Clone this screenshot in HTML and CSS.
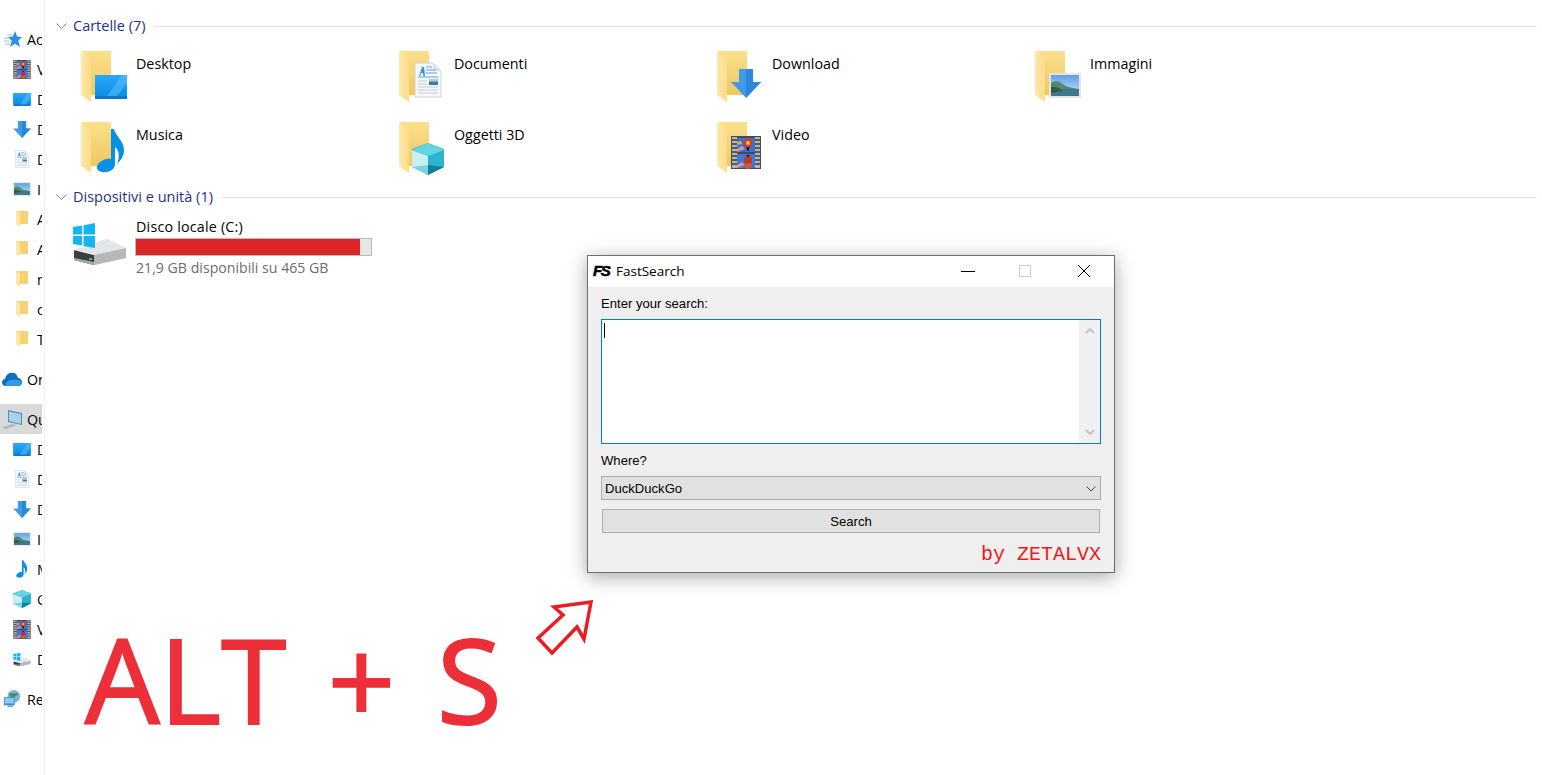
FILE: index.html
```html
<!DOCTYPE html>
<html lang="it">
<head>
<meta charset="utf-8">
<title>FastSearch</title>
<link rel="stylesheet" href="styles.css">
</head>
<body>
<svg class="defs" width="0" height="0" aria-hidden="true">
  <defs>
    <linearGradient id="gback" x1="0" y1="0" x2="0" y2="1"><stop offset="0" stop-color="#fbe08c"/><stop offset="1" stop-color="#f0c860"/></linearGradient>
    <linearGradient id="gflap" x1="0" y1="0" x2="1" y2="0"><stop offset="0" stop-color="#fee9a8"/><stop offset="1" stop-color="#fbdc88"/></linearGradient>
    <linearGradient id="gblue" x1="0" y1="0" x2="0" y2="1"><stop offset="0" stop-color="#2aa8fb"/><stop offset="1" stop-color="#0a8ee8"/></linearGradient>
    <linearGradient id="gsky" x1="0" y1="0" x2="0" y2="1"><stop offset="0" stop-color="#5f9fe8"/><stop offset="1" stop-color="#cfe3f5"/></linearGradient>
    <symbol id="folder" viewBox="0 0 32 52" overflow="visible">
      <path d="M1 1H31V45H11V9z" fill="url(#gback)"/>
      <path d="M1 1L11 8V52L1 45z" fill="url(#gflap)"/>
      <path d="M11 45H22L11 52z" fill="#fff"/>
    </symbol>
    <symbol id="desk" viewBox="0 0 32 24">
      <rect width="32" height="24" fill="#0f77c9"/>
      <rect x="0" y="0" width="32" height="21" fill="url(#gblue)"/>
      <path d="M12 21L27 0H32V8L22 21z" fill="#5cc0fc" opacity=".55"/>
    </symbol>
    <symbol id="note" viewBox="0 0 30 44">
      <path d="M15 0H18C19 6 28 12 28 21C28 27 25 31 21 35C24 27 23 21 19 18V35C19 41 12 44 6 43C0 42 -1 37 4 33C8 30 12 29 15 30z" fill="#0a8fe8"/>
    </symbol>
    <symbol id="doc" viewBox="0 0 28 36">
      <path d="M1 1H19L27 9V35H1z" fill="#f6f7f9" stroke="#cfd2d6"/>
      <path d="M19 1V9H27z" fill="#dfe2e6"/>
      <path d="M5 14L8 5H10L11 14H9.300L9 11H7L6 14z" fill="#3d8fdc"/>
      <path d="M12 5H18M12 8H22M12 11H23" stroke="#5aa5e4" stroke-width="1"/>
      <path d="M4 15H24" stroke="#5aa5e4" stroke-width="1"/>
      <path d="M4 19H13M4 22H13M4 25H24M4 28H24M4 31H24" stroke="#c8ccd2" stroke-width="1"/>
      <rect x="15" y="17" width="9" height="6" fill="#3f7f96"/>
      <rect x="15" y="17" width="9" height="2.500" fill="#a9cde8"/>
    </symbol>
    <symbol id="down" viewBox="0 0 30 29">
      <path d="M8 0H22V13H30L15 29L0 13H8z" fill="#3d9be9"/>
      <path d="M15 0H22V13H30L15 29z" fill="#2b87d8"/>
    </symbol>
    <symbol id="pic" viewBox="0 0 32 25">
      <rect width="32" height="25" fill="#e4e6e8"/>
      <rect x="2" y="2" width="28" height="21" fill="url(#gsky)"/>
      <path d="M2 10C7 7 11 8 15 12C20 15 26 15 30 16V23H2z" fill="#4d8a70"/>
      <path d="M2 16H30V23H2z" fill="#42778c"/>
      <path d="M2 14C6 13 10 14 14 18L2 20z" fill="#2f5f3c"/>
    </symbol>
    <symbol id="cube" viewBox="0 0 32 32">
      <path d="M16 0L32 6V24L16 32L0 24V6z" fill="#2bb3cf"/>
      <path d="M0 7L16 13V32L0 24z" fill="#c9eff4"/>
      <path d="M0 7L16 0L32 7L16 13z" fill="#62d5e5"/>
      <path d="M16 22L32 24L16 32z" fill="#0f7f9c"/>
      <path d="M16 22L0 24L16 32z" fill="#7fd2e0"/>
    </symbol>
    <symbol id="film" viewBox="0 0 30 33">
      <rect width="30" height="33" fill="#4a4a4a"/>
      <rect x="1" y="1" width="5" height="31" fill="#b5b5b5"/>
      <rect x="24" y="1" width="5" height="31" fill="#b5b5b5"/>
      <path d="M1 4H6M1 8H6M1 12H6M1 16H6M1 20H6M1 24H6M1 28H6M24 4H29M24 8H29M24 12H29M24 16H29M24 20H29M24 24H29M24 28H29" stroke="#3c3c3c" stroke-width="1.500"/>
      <rect x="6" y="2" width="18" height="14" fill="#3970d8"/>
      <rect x="6" y="18" width="18" height="14" fill="#3f78dc"/>
      <path d="M6 13L11 10L14 13L6 16zM6 29L11 26L14 29L6 32z" fill="#e89090"/>
      <path d="M6 6L10 5L11 8L6 9z" fill="#e8b040"/>
      <circle cx="17" cy="7" r="4.500" fill="#d83c20"/>
      <circle cx="17" cy="7" r="2" fill="#f2c430"/>
      <path d="M15.500 11H18.500L17.500 15H16.500z" fill="#111"/>
      <circle cx="17" cy="24" r="4" fill="#c83418"/>
      <path d="M15 19H19L17 21z" fill="#111"/>
      <circle cx="17" cy="30" r="3" fill="#e05020"/>
    </symbol>
    <symbol id="star" viewBox="0 0 18 17">
      <path d="M11 0L13.200 5.500L18 6L14.300 9.800L16 16L11 12.800L6 16L7.700 9.800L4 6L8.800 5.500z" fill="#2d8fdd"/>
      <path d="M0 7H4M0 10H5M1 13H6M3 4H8" stroke="#8cc4ef" stroke-width="1"/>
    </symbol>
    <symbol id="cloud" viewBox="0 0 20 14">
      <path d="M4 14C1 14 0 12 0 10C0 8 2 7 3 7C4 3 7 0 11 1C14 1 15 3 16 6C18 6 20 8 20 10C20 13 18 14 16 14z" fill="#0f6cc0"/>
      <path d="M4 14C3 11 6 8 9 8C12 7 16 7 20 10C20 13 18 14 16 14z" fill="#2c9ae6"/>
    </symbol>
    <symbol id="pc" viewBox="0 0 20 19">
      <path d="M6 0L20 3V15L6 12z" fill="#4f8fbf"/>
      <path d="M7 1.500L19 4V14L7 11z" fill="#a9d0ec"/>
      <path d="M0 17L11 14L15 15.500L4 19z" fill="#b4b8bc"/>
    </symbol>
    <symbol id="disk" viewBox="0 0 56 42">
      <path d="M2 27L35 16L54 25V35L22 42L2 37z" fill="#d9dadc"/>
      <path d="M2 27L22 32V42L2 37z" fill="#3e3e3e"/>
      <path d="M22 32L54 25V35L22 42z" fill="#b6b7b9"/>
      <path d="M2 27L35 16L54 25L22 32z" fill="#e4e5e7"/>
      <path d="M2 35L22 39V42L2 37z" fill="#a8a9ab"/>
      <rect x="17" y="35" width="3" height="2" fill="#3ecf4a"/>
      <path d="M1 4L10 2.500V11.500H1zM11.500 2.200L23 0V11.500H11.500zM1 13H10V22.500L1 21zM11.500 13H23V25L11.500 23z" fill="#14b6ef"/>
    </symbol>
    <symbol id="net" viewBox="0 0 20 20">
      <circle cx="12" cy="7" r="7" fill="#7db3d8"/>
      <path d="M7 3C10 5 14 2 17 4C15 8 12 7 10 9C8 8 7 6 7 3z" fill="#4c8a6e"/>
      <rect x="1" y="8" width="12" height="9" fill="#2f8fd8"/>
      <rect x="2" y="9" width="10" height="6" fill="#8fcaf2"/>
      <rect x="5" y="17" width="6" height="2" fill="#9aa0a6"/>
    </symbol>
    <symbol id="sfolder" viewBox="0 0 12 16">
      <path d="M0 0H12V13H3V3z" fill="#f5d276"/>
      <path d="M0 0L4 2V16L0 13z" fill="#fde7a2"/>
    </symbol>
  </defs>
</svg>

<div class="explorer">
  <nav class="sidebar">
    <div class="group">
      <div class="row top"><svg class="ico-star"><use href="#star"/></svg><span>Accesso rapido</span></div>
      <div class="row"><svg class="ico-film"><use href="#film"/></svg><span>Video</span></div>
      <div class="row"><svg class="ico-desk"><use href="#desk"/></svg><span>Desktop</span></div>
      <div class="row"><svg class="ico-down"><use href="#down"/></svg><span>Download</span></div>
      <div class="row"><svg class="ico-doc"><use href="#doc"/></svg><span>Documenti</span></div>
      <div class="row"><svg class="ico-pic"><use href="#pic"/></svg><span>Immagini</span></div>
      <div class="row"><svg class="ico-sf"><use href="#sfolder"/></svg><span>App</span></div>
      <div class="row"><svg class="ico-sf"><use href="#sfolder"/></svg><span>Archivio</span></div>
      <div class="row"><svg class="ico-sf"><use href="#sfolder"/></svg><span>nuova</span></div>
      <div class="row"><svg class="ico-sf"><use href="#sfolder"/></svg><span>codice</span></div>
      <div class="row"><svg class="ico-sf"><use href="#sfolder"/></svg><span>Temp</span></div>
    </div>
    <div class="group">
      <div class="row top"><svg class="ico-cloud"><use href="#cloud"/></svg><span>OneDrive</span></div>
    </div>
    <div class="group">
      <div class="row top selected"><svg class="ico-pc"><use href="#pc"/></svg><span>Questo PC</span></div>
      <div class="row"><svg class="ico-desk"><use href="#desk"/></svg><span>Desktop</span></div>
      <div class="row"><svg class="ico-doc"><use href="#doc"/></svg><span>Documenti</span></div>
      <div class="row"><svg class="ico-down"><use href="#down"/></svg><span>Download</span></div>
      <div class="row"><svg class="ico-pic"><use href="#pic"/></svg><span>Immagini</span></div>
      <div class="row"><svg class="ico-note"><use href="#note"/></svg><span>Musica</span></div>
      <div class="row"><svg class="ico-cube"><use href="#cube"/></svg><span>Oggetti 3D</span></div>
      <div class="row"><svg class="ico-film"><use href="#film"/></svg><span>Video</span></div>
      <div class="row"><svg class="ico-disk"><use href="#disk"/></svg><span>Disco locale</span></div>
    </div>
    <div class="group">
      <div class="row top"><svg class="ico-net"><use href="#net"/></svg><span>Rete</span></div>
    </div>
  </nav>

  <main class="content">
    <section class="section">
      <header class="section-head">
        <svg class="chev" viewBox="0 0 11 6"><path d="M.5.500L5.500 5.500L10.500.500" fill="none" stroke="#8a8a8a"/></svg>
        <span class="section-title">Cartelle (7)</span>
        <span class="section-line"></span>
      </header>
      <div class="tiles">
        <div class="tile"><svg class="tile-ico" viewBox="0 0 48 52"><use href="#folder" x="0" y="0" width="32" height="52"/><use href="#desk" x="15" y="25" width="32" height="24"/></svg><span class="tile-name">Desktop</span></div>
        <div class="tile"><svg class="tile-ico" viewBox="0 0 48 52"><use href="#folder" x="0" y="0" width="32" height="52"/><use href="#doc" x="16" y="12" width="28" height="36"/></svg><span class="tile-name">Documenti</span></div>
        <div class="tile"><svg class="tile-ico" viewBox="0 0 48 52"><use href="#folder" x="0" y="0" width="32" height="52"/><use href="#down" x="15" y="19" width="30" height="29"/></svg><span class="tile-name">Download</span></div>
        <div class="tile"><svg class="tile-ico" viewBox="0 0 48 52"><use href="#folder" x="0" y="0" width="32" height="52"/><use href="#pic" x="15" y="23" width="32" height="25"/></svg><span class="tile-name">Immagini</span></div>
        <div class="tile"><svg class="tile-ico" viewBox="0 0 48 52"><use href="#folder" x="0" y="0" width="32" height="52"/><use href="#note" x="16" y="8" width="30" height="44"/></svg><span class="tile-name">Musica</span></div>
        <div class="tile"><svg class="tile-ico" viewBox="0 0 48 52"><use href="#folder" x="0" y="0" width="32" height="52"/><use href="#cube" x="14" y="22" width="32" height="32"/></svg><span class="tile-name">Oggetti 3D</span></div>
        <div class="tile"><svg class="tile-ico" viewBox="0 0 48 52"><use href="#folder" x="0" y="0" width="32" height="52"/><use href="#film" x="15" y="15" width="30" height="33"/></svg><span class="tile-name">Video</span></div>
      </div>
    </section>
    <section class="section">
      <header class="section-head">
        <svg class="chev" viewBox="0 0 11 6"><path d="M.5.500L5.500 5.500L10.500.500" fill="none" stroke="#8a8a8a"/></svg>
        <span class="section-title">Dispositivi e unità (1)</span>
        <span class="section-line"></span>
      </header>
      <div class="drive">
        <svg class="drive-ico"><use href="#disk"/></svg>
        <div class="drive-info">
          <div class="drive-name">Disco locale (C:)</div>
          <div class="bar"><div class="bar-fill"></div></div>
          <div class="drive-free">21,9 GB disponibili su 465 GB</div>
        </div>
      </div>
    </section>
  </main>
</div>

<div class="dialog">
  <div class="titlebar">
    <span class="app-logo">FS</span>
    <span class="app-title">FastSearch</span>
    <div class="controls">
      <span class="ctl"><svg class="ctl-ico" viewBox="0 0 14 14"><path d="M0 7.500H14" stroke="#000" fill="none"/></svg></span>
      <span class="ctl"><svg class="ctl-ico" viewBox="0 0 14 14"><rect x="1.500" y="1.500" width="11" height="11" stroke="#ccc" fill="none"/></svg></span>
      <span class="ctl"><svg class="ctl-ico" viewBox="0 0 14 14"><path d="M1 1L13 13M13 1L1 13" stroke="#000" fill="none"/></svg></span>
    </div>
  </div>
  <div class="dialog-body">
    <div class="label">Enter your search:</div>
    <div class="textbox">
      <div class="textarea"><span class="caret"></span></div>
      <div class="scrollbar">
        <svg class="sb-arrow" viewBox="0 0 10 6"><path d="M1 5L5 1L9 5" fill="none" stroke="#c4c4c4" stroke-width="2"/></svg>
        <svg class="sb-arrow" viewBox="0 0 10 6"><path d="M1 1L5 5L9 1" fill="none" stroke="#c4c4c4" stroke-width="2"/></svg>
      </div>
    </div>
    <div class="label where">Where?</div>
    <div class="select">
      <span>DuckDuckGo</span>
      <svg class="sel-arrow" viewBox="0 0 10 6"><path d="M.5.500L5 5L9.500.500" fill="none" stroke="#444"/></svg>
    </div>
    <div class="button">Search</div>
    <div class="credit">by ZETALVX</div>
  </div>
</div>

<div class="shortcut">ALT + S</div>
<svg class="pointer" viewBox="0 0 60 60"><path d="M18 7L55 2L48 39L41 27L16 53L2 38L27 15z" fill="#fff" stroke="#ed1c24" stroke-width="3.5"/></svg>
</body>
</html>
```
FILE: styles.css
```css
* { box-sizing: border-box; }
html, body { margin: 0; height: 100%; }
body {
  position: relative;
  width: 1542px;
  height: 775px;
  overflow: hidden;
  background: #fff;
  font-family: "Open Sans", "Noto Sans", sans-serif;
  font-size: 14.3px;
  color: #000;
}
.defs { position: absolute; }

.explorer { display: flex; height: 100%; }

.sidebar {
  flex: none;
  width: 42px;
  margin-right: 2px;
  padding-top: 24px;
  display: flex;
  flex-direction: column;
  gap: 10px;
  overflow: hidden;
}
.row {
  display: flex;
  align-items: center;
  height: 30px;
  width: 42px;
  padding-left: 13px;
  white-space: nowrap;
  overflow: hidden;
}
.row svg { flex: none; }
.row span { margin-left: 6px; }
.row.top { padding-left: 2px; }
.row.top span { margin-left: 5px; }
.row.selected { background: #d9d9d9; }

.ico-star { width: 18px; height: 17px; margin-left: 2px; }
.ico-film { width: 18px; height: 19px; }
.ico-desk { width: 18px; height: 13px; }
.ico-down { width: 18px; height: 17px; }
.ico-doc { width: 18px; height: 18px; }
.ico-pic { width: 18px; height: 14px; }
.ico-sf { width: 18px; height: 16px; }
.ico-cloud { width: 20px; height: 14px; }
.ico-pc { width: 20px; height: 19px; }
.ico-note { width: 18px; height: 18px; }
.ico-cube { width: 18px; height: 18px; }
.ico-disk { width: 18px; height: 15px; }
.ico-net { width: 20px; height: 18px; }

.content {
  flex: 1;
  min-width: 0;
  border-left: 1px solid #f0f0f0;
  padding: 16px 5px 0 0;
}
.section-head {
  display: flex;
  align-items: center;
  height: 20px;
  padding-left: 11px;
}
.chev { width: 11px; height: 6px; flex: none; margin-right: 6px; margin-top: -1px; }
.section-title {
  color: #1e3287;
  white-space: nowrap;
  font-size: 14.5px;
  line-height: 20px;
  margin-top: -1px;
}
.section-line { flex: 1; height: 1px; background: #e5e5e5; margin-left: 8px; }

.tiles {
  display: grid;
  grid-template-columns: repeat(4, 318px);
  grid-auto-rows: 64px;
  row-gap: 7px;
  padding: 14px 0 2px 35px;
}
.tile { display: flex; gap: 8px; }
.tile-ico { flex: none; width: 48px; height: 52px; overflow: visible; }
.tile-name { line-height: 20px; margin-top: 4px; }

.drive {
  display: flex;
  gap: 8px;
  padding: 10px 0 0 27px;
}
.drive-ico { flex: none; width: 56px; height: 42px; margin-top: 6px; }
.drive-info { width: 237px; margin-left: -1px; }
.drive-name, .drive-free { line-height: 20px; padding-left: 1px; white-space: nowrap; }
.drive-name { letter-spacing: .2px; }
.drive-free { color: #6d6d6d; margin-top: 2px; font-size: 14.15px; }
.bar { height: 18px; margin-top: 1px; border: 1px solid #bcbcbc; background: #e6e6e6; }
.bar-fill { height: 100%; width: 95.5%; background: #da2626; }

.dialog {
  position: absolute;
  left: 587px;
  top: 255px;
  width: 528px;
  height: 318px;
  border: 1px solid #6e6e6e;
  background: #efefef;
  box-shadow: 0 4px 18px rgba(0, 0, 0, .35);
  display: flex;
  flex-direction: column;
  font-family: "Liberation Sans", Arial, sans-serif;
  font-size: 13.1px;
}
.titlebar {
  display: flex;
  align-items: flex-start;
  height: 31px;
  background: #fff;
  padding-left: 5px;
  flex: none;
}
.app-logo {
  width: 18px;
  height: 29px;
  font-weight: 700;
  font-style: italic;
  font-size: 15px;
  line-height: 30px;
  letter-spacing: -1.5px;
  color: #000;
  -webkit-text-stroke: .6px #000;
}
.app-title {
  margin-left: 5px;
  font-family: "Open Sans", sans-serif;
  font-size: 13.5px;
  line-height: 30px;
}
.controls { margin-left: auto; display: flex; padding-right: 1px; }
.ctl {
  width: 58px;
  height: 29px;
  display: flex;
  align-items: center;
  justify-content: center;
}
.ctl:nth-child(1) { width: 54px; }
.ctl:nth-child(2) { width: 60px; }
.ctl-ico { width: 14px; height: 14px; }

.dialog-body { padding: 9px 13px 0; display: flex; flex-direction: column; }
.label { height: 15px; line-height: 16px; }
.textbox {
  display: flex;
  flex: none;
  height: 125px;
  margin-top: 8px;
  border: 1px solid #0078d7;
  background: #fff;
}
.textarea { flex: 1; padding: 3px 0 0 2px; }
.caret { display: block; width: 1px; height: 15px; background: #000; }
.scrollbar {
  width: 21px;
  background: #f0f0f0;
  display: flex;
  flex-direction: column;
  justify-content: space-between;
  align-items: center;
  padding: 8px 0;
}
.sb-arrow { width: 10px; height: 6px; }
.where { margin-top: 9px; }
.select {
  display: flex;
  align-items: center;
  justify-content: space-between;
  flex: none;
  height: 24px;
  margin-top: 8px;
  padding: 1px 4px 0 3px;
  background: #e1e1e1;
  border: 1px solid #adadad;
}
.sel-arrow { width: 10px; height: 6px; }
.button {
  flex: none;
  height: 24px;
  margin: 9px 1px 0;
  line-height: 24px;
  text-align: center;
  background: #e1e1e1;
  border: 1px solid #adadad;
}
.credit {
  margin-top: 12px;
  line-height: 20px;
  text-align: right;
  font-family: "Liberation Mono", "Courier New", monospace;
  font-size: 20px;
  color: #f01818;
}

.shortcut {
  position: absolute;
  left: 85px;
  top: 596px;
  font-size: 118px;
  font-weight: 500;
  line-height: 166px;
  word-spacing: 11px;
  color: #ed2f39;
  -webkit-text-stroke: 2px #ed2f39;
  white-space: nowrap;
}
.pointer {
  position: absolute;
  left: 536px;
  top: 600px;
  width: 60px;
  height: 60px;
}
```
